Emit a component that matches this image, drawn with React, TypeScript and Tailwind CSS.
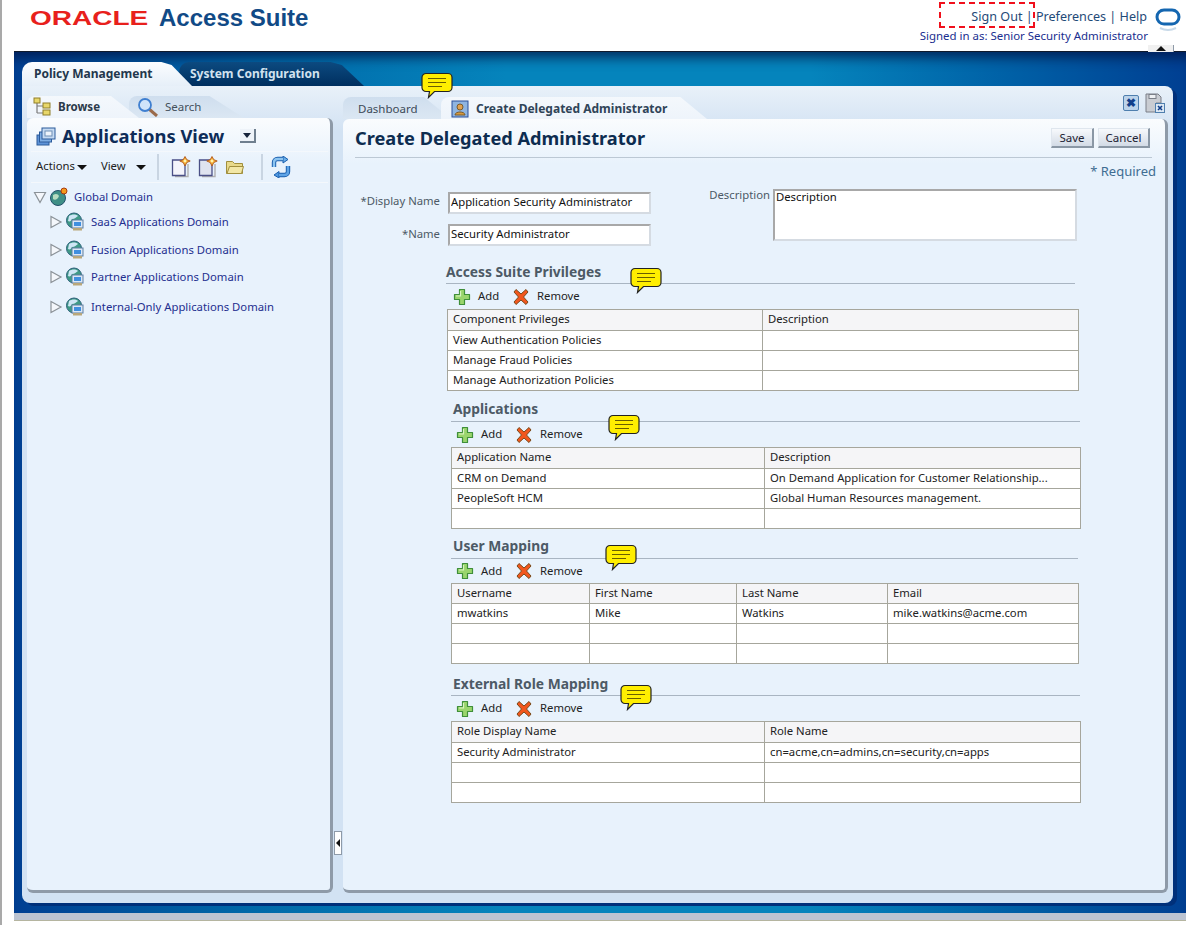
import React from 'react';

const font = "font-['Noto_Sans','Liberation_Sans',sans-serif]";

function Bubble({ className }: { className: string }) {
    return (
        <svg className={`absolute z-20 ${className}`} width="32" height="27" viewBox="0 0 32 27">
            <path d="M5 1.5h22a4 4 0 0 1 4 4v10a4 4 0 0 1-4 4H13.5L7.5 25.5l1-6H5a4 4 0 0 1-4-4v-10a4 4 0 0 1 4-4z" fill="#ffee00" stroke="#222" strokeWidth="1.2" />
            <path d="M7 6.5h18M7 10.5h18M7 14.5h14" stroke="#6b5f00" strokeWidth="1.2" />
        </svg>
    );
}

function PlusIcon() {
    return (
        <svg width="18" height="18" viewBox="0 0 18 18">
            <path d="M6.5 1.5h5v5h5v5h-5v5h-5v-5h-5v-5h5z" fill="#9ad56d" stroke="#3f8f3a" strokeWidth="1.2" strokeLinejoin="round" />
            <path d="M7.5 3v5h-4.5" fill="none" stroke="#d8f3c0" strokeWidth="1.2" />
        </svg>
    );
}

function RemoveIcon() {
    return (
        <svg width="18" height="18" viewBox="0 0 18 18">
            <path d="M2 4l2-2.5 5 4.5 5-4.5 2 2.5-4.5 5 4.5 5-2 2.5-5-4.5-5 4.5-2-2.5 4.5-5z" fill="#f2561d" stroke="#7a4a1a" strokeWidth="1" strokeLinejoin="round" />
        </svg>
    );
}

function DomainIcon() {
    return (
        <svg width="20" height="20" viewBox="0 0 20 20">
            <circle cx="9" cy="8.5" r="7.5" fill="#3f9a86" stroke="#2c5f7a" />
            <path d="M4 4c3-2 7-2 9 0-2 1-3 3-6 3-1 2-2 3-4 2z" fill="#cfe6f5" />
            <rect x="7" y="8" width="11" height="8" fill="#dbe7f6" stroke="#5f7f9f" />
            <rect x="9" y="10" width="7" height="4" fill="#3f8fdf" />
            <rect x="8" y="16" width="9" height="2.5" fill="#b9a77a" />
        </svg>
    );
}

function TreeCaret({ open }: { open?: boolean }) {
    return (
        <svg width="14" height="14" viewBox="0 0 14 14">
            {open ? (
                <path d="M1.5 2.5h11L7 12.5z" fill="#f4f7fb" stroke="#8b9298" strokeWidth="1.2" />
            ) : (
                <path d="M2 1.5v11l10-5.5z" fill="#f4f7fb" stroke="#8b9298" strokeWidth="1.2" />
            )}
        </svg>
    );
}

function NewPageIcon({ tint }: { tint: string }) {
    return (
        <svg width="20" height="22" viewBox="0 0 20 22">
            <path d="M4 20.5h13V8" fill="none" stroke="#b0b0b0" strokeWidth="1.4" />
            <path d="M1.5 4h12.5v15.5H1.5z" fill={tint} stroke="#4a4f86" strokeWidth="1.3" />
            <path d="M14 0.5l1.8 3.2 3.4 1.3-3.4 1.5L14 10l-1.8-3.5-3.4-1.5 3.4-1.3z" fill="#f9b233" stroke="#b0561a" strokeWidth=".9" />
            <circle cx="14" cy="5" r="1.4" fill="#fff3b0" />
        </svg>
    );
}

function FolderIcon() {
    return (
        <svg width="20" height="18" viewBox="0 0 20 18">
            <path d="M1.5 3.5h6l2 2h8v10h-16z" fill="#e8d98a" stroke="#a18f3d" />
            <path d="M2 15.5l2.5-7h14l-2 7z" fill="#f2e7a6" stroke="#a18f3d" />
        </svg>
    );
}

function RefreshIcon() {
    return (
        <svg width="20" height="22" viewBox="0 0 20 22">
            <path d="M3 11V6.5C3 4.5 4.5 3 6.5 3H12" fill="none" stroke="#1b5fae" strokeWidth="4.4" />
            <path d="M12 0l5 3.5-5 3.5z" fill="#6aaee8" stroke="#1b5fae" strokeLinejoin="round" />
            <path d="M3 11V6.5C3 4.5 4.5 3 6.5 3H12" fill="none" stroke="#8cc4f0" strokeWidth="2.4" />
            <path d="M17 10v5.5c0 2-1.5 3.5-3.5 3.5H8" fill="none" stroke="#1b5fae" strokeWidth="4.4" />
            <path d="M8 15.5l-5 3.5 5 3z" fill="#4f97df" stroke="#1b5fae" strokeLinejoin="round" />
            <path d="M17 10v5.5c0 2-1.5 3.5-3.5 3.5H8" fill="none" stroke="#5fa4e6" strokeWidth="2.4" />
        </svg>
    );
}

function AddRemove({ className }: { className: string }) {
    return (
        <div className={`flex items-center text-[11.3px] text-[#222] ${className}`}>
            <PlusIcon />
            <span className="ml-[7px] w-[34px]">Add</span>
            <RemoveIcon />
            <span className="ml-[7px]">Remove</span>
        </div>
    );
}

type SectionProps = {
    title: string;
    className: string;
    headClass: string;
    barClass: string;
    headRow: string;
    cols: string[];
    rows: string[][];
};

function Section({ title, className, headClass, barClass, headRow, cols, rows }: SectionProps) {
    return (
        <section className={className}>
            <h3 className={`border-b border-[#a9b5c2] text-[13.8px] font-bold text-[#4d5a66] ${headClass}`}>{title}</h3>
            <AddRemove className={barClass} />
            <table className="w-full table-fixed border-collapse border border-[#94948a] bg-white text-[11.3px] text-[#222]">
                <colgroup>
                    {cols.map((w) => (
                        <col key={w} className={w} />
                    ))}
                </colgroup>
                <tbody>
                    {rows.map((row, i) => (
                        <tr key={i} className={i === 0 ? `${headRow} bg-[#f5f5f7]` : 'h-[20px]'}>
                            {row.map((c, j) => (
                                <td key={j} className="overflow-hidden whitespace-nowrap border border-[#a6a69c] px-[5px] pb-[2px] pt-0 leading-none">
                                    {c}
                                </td>
                            ))}
                        </tr>
                    ))}
                </tbody>
            </table>
        </section>
    );
}

const treeItems = [
    { name: 'SaaS Applications Domain', row: 'mt-[5px]' },
    { name: 'Fusion Applications Domain', row: 'mt-[8px]' },
    { name: 'Partner Applications Domain', row: 'mt-[7px]' },
    { name: 'Internal-Only Applications Domain', row: 'mt-[10px]' },
];

export default function App() {
    return (
        <div className={`relative flex h-[925px] w-[1200px] overflow-hidden bg-white ${font}`}>
            <div className="w-[2px] shrink-0 bg-[#a9a9a9]" />
            <div className="ml-[12px] w-[1172px]">
                {/* Header */}
                <header className="flex h-[51px] justify-between">
                    <div className="flex items-start pl-[16px] pt-[5px]">
                        <span className="w-[129px] text-[#e8201c]">
                            <span className="inline-block origin-left scale-x-[1.4] font-['Liberation_Sans'] text-[20px] font-bold leading-[26px]">ORACLE</span>
                        </span>
                        <span className="font-['Liberation_Sans'] text-[24px] font-bold leading-[26px] text-[#114a86]">Access Suite</span>
                    </div>
                    <div className="flex pr-[5px]">
                        <div className="pt-[7px] text-right">
                            <div className="pr-[1px] text-[12.6px] leading-[20px] text-[#1f4a78]">Sign Out | Preferences | Help</div>
                            <div className="pt-[1px] text-[11.45px] leading-[16px] text-[#1a2f8f]">Signed in as: Senior Security Administrator</div>
                        </div>
                        <svg className="ml-[7px] mt-[7px]" width="26" height="26" viewBox="0 0 26 26">
                            <rect x="2" y="3" width="22" height="14" rx="7" fill="none" stroke="#1466b0" strokeWidth="3" />
                            <path d="M5 21c5 2.5 11 2.5 16 0" fill="none" stroke="#c7d9e8" strokeWidth="2" />
                        </svg>
                    </div>
                </header>

                {/* Blue frame */}
                <main className="h-[862px] border-t border-[#101a2c] bg-[linear-gradient(90deg,#003f92_0%,#0068a8_20%,#0584bc_42%,#0584bc_68%,#0060a6_85%,#003f92_100%)] pl-[8px] pr-[13px] pt-[10px] shadow-[inset_0_14px_12px_-8px_rgba(0,20,70,0.75)]">
                    <nav className="flex h-[24px] text-[12px] font-bold">
                        <div className="relative z-10 flex w-[170px] items-center rounded-tl-[10px] bg-[linear-gradient(#fbfdff,#e6eff8)] pl-[12px] text-[#23374d] [clip-path:polygon(0_0,82%_0,88%_12%,100%_100%,0_100%)]">
                            Policy Management
                        </div>
                        <div className="-ml-[13px] flex w-[185px] items-center rounded-tl-[10px] bg-[linear-gradient(#0c4a80,#002f5f)] pl-[11px] text-[#d2e2ef] [clip-path:polygon(0_0,82%_0,88%_12%,100%_100%,0_100%)]">
                            System Configuration
                        </div>
                    </nav>

                    <div className="flex h-[817px] rounded-b-[8px] rounded-tr-[8px] bg-[linear-gradient(#e9f1f9,#d2e2f3_45px)] pl-[5px] pt-[9px] shadow-[4px_3px_0_#00307a]">
                        {/* Left pane */}
                        <div className="w-[306px] shrink-0">
                            <div className="flex h-[23px] pt-[1px] text-[11.5px]">
                                <div className="relative z-10 flex w-[112px] items-center rounded-tl-[8px] bg-[linear-gradient(#f4f8fc,#eef4fb)] pl-[5px] font-bold text-[#2b3a4a] [clip-path:polygon(0_0,75%_0,100%_100%,0_100%)]">
                                    <svg width="22" height="20" viewBox="0 0 22 20">
                                        <path d="M5 4v12M5 9h7M5 16h7" fill="none" stroke="#7a7a7a" strokeWidth="1.2" />
                                        <rect x="2" y="1" width="6" height="5" fill="#e8d76a" stroke="#8f7f2a" />
                                        <rect x="11" y="6" width="7" height="5" fill="#e8d76a" stroke="#8f7f2a" />
                                        <rect x="11" y="13" width="7" height="5" fill="#e8d76a" stroke="#8f7f2a" />
                                    </svg>
                                    <span className="ml-[4px]">Browse</span>
                                </div>
                                <div className="-ml-[10px] flex w-[115px] items-center rounded-tl-[8px] bg-[linear-gradient(#cfdeee,#dbe7f3)] pl-[8px] text-[#44505c] [clip-path:polygon(0_0,70%_0,100%_100%,0_100%)]">
                                    <svg width="22" height="20" viewBox="0 0 22 20">
                                        <path d="M12 12l8 7" stroke="#9a6a4a" strokeWidth="3" />
                                        <circle cx="8" cy="8" r="6" fill="#cfe4fa" stroke="#3f7fd0" strokeWidth="1.8" />
                                    </svg>
                                    <span className="ml-[6px]">Search</span>
                                </div>
                            </div>
                            <div className="h-[775px] rounded-[6px] border-b-[3px] border-r-[3px] border-[#8e9aa8] bg-[linear-gradient(#fafcfe,#e8f2fc_45px)] pl-[4px] pr-[2px]">
                                <div className="flex h-[34px] items-center border-b border-[#f4f8fc] pl-[5px] pt-[3px]">
                                    <svg width="20" height="22" viewBox="0 0 20 22">
                                        <rect x="1" y="10" width="12" height="10" fill="#5d93d8" stroke="#2a5a9a" />
                                        <rect x="3.5" y="7" width="12" height="10" fill="#7eaee4" stroke="#2a5a9a" />
                                        <rect x="6" y="3" width="13" height="11" fill="#c5daf2" stroke="#2a5a9a" />
                                        <rect x="9" y="6" width="7" height="5" fill="#eef4fb" stroke="#6f8fb5" />
                                    </svg>
                                    <h2 className="ml-[6px] text-[18.4px] font-bold leading-none text-[#0d2c58]">Applications View</h2>
                                    <div className="ml-[16px] flex h-[14px] w-[16px] items-center justify-center border-b-2 border-r-2 border-[#6f7f8f] bg-[#eef3f9]">
                                        <div className="h-0 w-0 border-x-[4px] border-t-[5px] border-x-transparent border-t-[#16233a]" />
                                    </div>
                                </div>
                                <div className="flex h-[31px] items-center border-b border-[#f4f8fc] pl-[5px] text-[11.3px] text-[#222]">
                                    <span className="pb-[2px]">Actions</span>
                                    <div className="ml-[2px] h-0 w-0 border-x-[5px] border-t-[5px] border-x-transparent border-t-[#111]" />
                                    <span className="ml-[14px] pb-[2px]">View</span>
                                    <div className="ml-[10px] h-0 w-0 border-x-[5px] border-t-[5px] border-x-transparent border-t-[#111]" />
                                    <div className="ml-[11px] h-[26px] w-[2px] bg-[#c9d5e2]" />
                                    <div className="ml-[12px] flex items-center gap-[7px]">
                                        <NewPageIcon tint="#f4f4fb" />
                                        <NewPageIcon tint="#dfe3ef" />
                                        <FolderIcon />
                                    </div>
                                    <div className="ml-[16px] h-[26px] w-[2px] bg-[#c9d5e2]" />
                                    <div className="ml-[8px]"><RefreshIcon /></div>
                                </div>
                                <div className="pl-[2px] pt-[1px] text-[11.3px] text-[#1f2f8f]">
                                    <div className="mt-[3px] flex h-[20px] items-center">
                                        <TreeCaret open />
                                        <svg className="ml-[2px]" width="20" height="20" viewBox="0 0 20 20">
                                            <circle cx="9" cy="11" r="7.5" fill="#3f8f86" stroke="#23506a" />
                                            <path d="M4 8c3-2 5-1 6 1-1 3-4 5-6 3z" fill="#b7dcc0" />
                                            <circle cx="15" cy="4" r="3" fill="#f59a1c" stroke="#a83c10" />
                                        </svg>
                                        <span className="ml-[5px]">Global Domain</span>
                                    </div>
                                    {treeItems.map((item) => (
                                        <div key={item.name} className={`flex h-[20px] items-center pl-[16px] ${item.row}`}>
                                            <TreeCaret />
                                            <div className="ml-[2px]"><DomainIcon /></div>
                                            <span className="ml-[6px]">{item.name}</span>
                                        </div>
                                    ))}
                                </div>
                            </div>
                        </div>

                        {/* Splitter */}
                        <div className="w-[10px] shrink-0 pl-[1px] pt-[736px]">
                            <div className="flex h-[24px] w-[8px] items-center justify-center border border-[#8e9aa8] bg-white">
                                <div className="h-0 w-0 border-y-[4px] border-r-[4px] border-y-transparent border-r-[#111]" />
                            </div>
                        </div>

                        {/* Right pane */}
                        <div className="relative w-[825px] shrink-0">
                            <Bubble className="left-[78px] -top-[23px]" />
                            <div className="flex h-[24px] items-end text-[11.5px]">
                                <div className="flex h-[22px] w-[108px] items-center rounded-tl-[8px] bg-[linear-gradient(#cfdeee,#dbe7f3)] pl-[15px] pt-[2px] text-[#3c4a58] [clip-path:polygon(0_0,75%_0,100%_100%,0_100%)]">
                                    Dashboard
                                </div>
                                <div className="relative z-10 -ml-[10px] flex h-[22px] w-[266px] items-center rounded-tl-[8px] bg-[linear-gradient(#f4f8fc,#eef4fb)] pl-[10px] pt-[2px] text-[12px] font-bold text-[#304458] [clip-path:polygon(0_0,90%_0,100%_100%,0_100%)]">
                                    <svg width="18" height="18" viewBox="0 0 18 18">
                                        <rect x="1" y="1" width="16" height="16" fill="#8fb4e0" stroke="#2a4f9a" />
                                        <circle cx="9" cy="7" r="3" fill="#e0a050" stroke="#7a5a2a" />
                                        <path d="M4 15c0-4 10-4 10 0z" fill="#d99a3c" stroke="#7a5a2a" />
                                    </svg>
                                    <span className="ml-[7px]">Create Delegated Administrator</span>
                                </div>
                                <div className="ml-auto mr-[3px] flex items-center gap-[6px] pb-[6px]">
                                    <div className="flex h-[16px] w-[16px] items-center justify-center rounded-[2px] border border-[#4f7fae] bg-[#bcd3ea] text-[12px] font-bold leading-none text-[#123f8a]">✖</div>
                                    <svg width="20" height="20" viewBox="0 0 20 20">
                                        <path d="M1 1h12l3 3v6h-5v9H1z" fill="#c9ccd2" stroke="#7a7f88" />
                                        <rect x="4" y="1.5" width="7" height="4" fill="#eef0f3" stroke="#7a7f88" />
                                        <rect x="10.5" y="10.5" width="9" height="9" fill="#dbe7f3" stroke="#4f7fae" />
                                        <path d="M13 13l4 4m0-4l-4 4" stroke="#123f8a" strokeWidth="1.6" />
                                    </svg>
                                </div>
                            </div>

                            <div className="relative h-[774px] rounded-[6px] border-b-[3px] border-r-[3px] border-[#8e9aa8] bg-[linear-gradient(#fafcfe,#e8f2fc_45px)] pl-[12px] pr-[13px]">
                                <div className="flex h-[39px] items-center justify-between border-b border-[#bcc8d4]">
                                    <h1 className="text-[18.2px] font-bold leading-none text-[#0d2c50]">Create Delegated Administrator</h1>
                                    <div className="flex gap-[4px] pr-[2px] text-[11.5px] text-[#223]">
                                        <button className="h-[20px] w-[43px] border-b-2 border-r-2 border-[#8a97a5] border-l border-t border-l-[#dfe6ee] border-t-[#dfe6ee] bg-[linear-gradient(#f7f9fc,#d3dbe6)]">Save</button>
                                        <button className="h-[20px] w-[52px] border-b-2 border-r-2 border-[#8a97a5] border-l border-t border-l-[#dfe6ee] border-t-[#dfe6ee] bg-[linear-gradient(#f7f9fc,#d3dbe6)]">Cancel</button>
                                    </div>
                                </div>
                                <div className="-mr-[4px] flex h-[31px] items-center justify-end pb-[4px] text-[13px] text-[#3f6d92]">* Required</div>

                                {/* Form */}
                                <div className="flex h-[52px] text-[11.3px]">
                                    <div className="w-[85px] pt-[1px] text-right leading-[22px] text-[#4d5a66]">
                                        <div className="h-[33px]">*Display Name</div>
                                        <div>*Name</div>
                                    </div>
                                    <div className="ml-[8px] w-[203px] pt-[3px]">
                                        <input readOnly value="Application Security Administrator" className="mb-[10px] block h-[22px] w-full border-2 border-b-[#d5dbe2] border-l-[#a8a8a8] border-r-[#d5dbe2] border-t-[#a8a8a8] bg-white px-[1px] pb-[3px] text-[#111] outline-none" />
                                        <input readOnly value="Security Administrator" className="block h-[22px] w-full border-2 border-b-[#d5dbe2] border-l-[#a8a8a8] border-r-[#d5dbe2] border-t-[#a8a8a8] bg-white px-[1px] pb-[3px] text-[#111] outline-none" />
                                    </div>
                                    <div className="w-[119px] text-right leading-[12px] text-[#4d5a66]"><span className="inline-block">Description</span></div>
                                    <textarea readOnly value="Description" className="ml-[3px] h-[52px] w-[304px] resize-none border-2 border-b-[#d5dbe2] border-l-[#a8a8a8] border-r-[#d5dbe2] border-t-[#a8a8a8] bg-white px-[1px] py-0 leading-[12px] text-[#111] outline-none" />
                                </div>

                                <Bubble className="left-[287px] top-[148px]" />
                                <Bubble className="left-[265px] top-[295px]" />
                                <Bubble className="left-[262px] top-[425px]" />
                                <Bubble className="left-[277px] top-[565px]" />

                                <Section
                                    title="Access Suite Privileges"
                                    className="ml-[92px] mt-[23px] w-[631px]"
                                    headClass="-ml-[1px] mr-[3px] h-[20px] leading-[16px]"
                                    barClass="h-[25px] pl-[6px]"
                                    headRow="h-[21px]"
                                    cols={['w-[315px]', 'w-[316px]']}
                                    rows={[
                                        ['Component Privileges', 'Description'],
                                        ['View Authentication Policies', ''],
                                        ['Manage Fraud Policies', ''],
                                        ['Manage Authorization Policies', ''],
                                    ]}
                                />
                                <Section
                                    title="Applications"
                                    className="ml-[96px] mt-[10px] w-[629px]"
                                    headClass="h-[21px] pl-[2px] leading-[16px]"
                                    barClass="h-[25px] pl-[5px]"
                                    headRow="h-[21px]"
                                    cols={['w-[313px]', 'w-[316px]']}
                                    rows={[
                                        ['Application Name', 'Description'],
                                        ['CRM on Demand', 'On Demand Application for Customer Relationship...'],
                                        ['PeopleSoft HCM', 'Global Human Resources management.'],
                                        ['', ''],
                                    ]}
                                />
                                <Section
                                    title="User Mapping"
                                    className="ml-[96px] mt-[9px] w-[627px]"
                                    headClass="h-[21px] pl-[2px] leading-[16px]"
                                    barClass="h-[24px] pl-[5px]"
                                    headRow="h-[20px]"
                                    cols={['w-[138px]', 'w-[147px]', 'w-[151px]', 'w-[191px]']}
                                    rows={[
                                        ['Username', 'First Name', 'Last Name', 'Email'],
                                        ['mwatkins', 'Mike', 'Watkins', 'mike.watkins@acme.com'],
                                        ['', '', '', ''],
                                        ['', '', '', ''],
                                    ]}
                                />
                                <Section
                                    title="External Role Mapping"
                                    className="ml-[96px] mt-[12px] w-[629px]"
                                    headClass="h-[20px] pl-[2px] leading-[16px]"
                                    barClass="h-[25px] pl-[5px]"
                                    headRow="h-[21px]"
                                    cols={['w-[313px]', 'w-[316px]']}
                                    rows={[
                                        ['Role Display Name', 'Role Name'],
                                        ['Security Administrator', 'cn=acme,cn=admins,cn=security,cn=apps'],
                                        ['', ''],
                                        ['', ''],
                                    ]}
                                />
                            </div>
                        </div>
                    </div>
                </main>
                <div className="h-[7px] bg-[#bcc4d2]" />
                <div className="h-[1px] bg-[#b5b5a0]" />
            </div>

            {/* Dashed annotation around Sign Out */}
            <div className="absolute left-[939px] top-[2px] h-[26px] w-[96px] border-2 border-dashed border-[#f0101c]" />
            {/* Header collapse handle */}
            <div className="absolute left-[1148px] top-[45px] flex h-[7px] w-[26px] items-start justify-center border-r border-[#8e9aa8] bg-[#f0f0f0]">
                <div className="mt-[1px] h-0 w-0 border-x-[5px] border-b-[5px] border-x-transparent border-b-[#111]" />
            </div>
        </div>
    );
}
